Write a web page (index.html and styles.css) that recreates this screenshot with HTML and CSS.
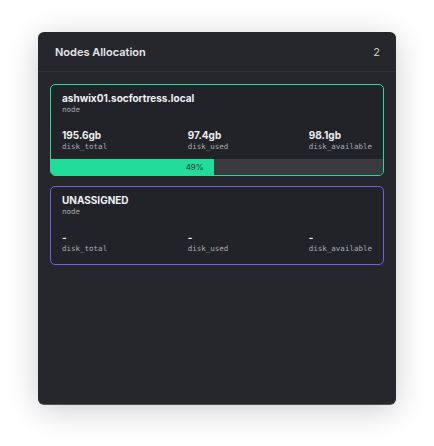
FILE: index.html
```html
<html>
<head>
  <link rel="stylesheet" href="styles.css">
</head>
<body>
  <div class="panel">
    <div class="panel-header">
      <span class="title">Nodes Allocation</span>
      <span class="count">2</span>
    </div>
    <div class="panel-body">
      <div class="node node-assigned">
        <div class="node-name">ashwix01.socfortress.local</div>
        <div class="node-sub">node</div>
        <div class="stats">
          <div class="stat">
            <div class="stat-value">195.6gb</div>
            <div class="stat-label">disk_total</div>
          </div>
          <div class="stat">
            <div class="stat-value">97.4gb</div>
            <div class="stat-label">disk_used</div>
          </div>
          <div class="stat">
            <div class="stat-value">98.1gb</div>
            <div class="stat-label">disk_available</div>
          </div>
        </div>
        <div class="bar">
          <div class="bar-fill" style="width: 49%">49%</div>
        </div>
      </div>
      <div class="node node-unassigned">
        <div class="node-name">UNASSIGNED</div>
        <div class="node-sub">node</div>
        <div class="stats">
          <div class="stat">
            <div class="stat-value">-</div>
            <div class="stat-label">disk_total</div>
          </div>
          <div class="stat">
            <div class="stat-value">-</div>
            <div class="stat-label">disk_used</div>
          </div>
          <div class="stat">
            <div class="stat-value">-</div>
            <div class="stat-label">disk_available</div>
          </div>
        </div>
      </div>
    </div>
  </div>
</body>
</html>
```

FILE: styles.css
```css
body {
  margin: 0;
  padding: 32px 38px 0;
  background: #ffffff;
  font-family: Inter, "Noto Sans", sans-serif;
}
.panel {
  height: 372px;
  background: #26272d;
  border-radius: 6px;
  box-shadow: 0 6px 32px rgba(0, 0, 0, 0.2), 0 1px 0 #5d5e64;
  overflow: hidden;
}
.panel-header {
  height: 39px;
  display: flex;
  align-items: center;
  justify-content: space-between;
  padding: 0 16px 0 17px;
  border-bottom: 1px solid #313238;
}
.title {
  font-size: 11px;
  font-weight: 600;
  color: #e6e6e9;
}
.count {
  font-size: 11px;
  color: #c9cacd;
}
.panel-body {
  padding: 12px;
  display: flex;
  flex-direction: column;
  gap: 10px;
}
.node {
  border-radius: 5px;
  padding: 6px 11px 0;
  overflow: hidden;
  background: #222329;
}
.node-assigned {
  border: 1px solid #22dc9c;
}
.node-unassigned {
  border: 1px solid #6f60dc;
  padding-bottom: 10px;
}
.node-name {
  font-size: 10px;
  line-height: 14px;
  font-weight: 700;
  color: #f0f0f2;
}
.node-sub,
.stat-label {
  font-family: "DejaVu Sans Mono", monospace;
  font-size: 7.5px;
  line-height: 10px;
  color: #a8aab0;
}
.stats {
  display: flex;
  justify-content: space-between;
  margin-top: 14px;
}
.stat-value {
  font-size: 10px;
  line-height: 13px;
  font-weight: 700;
  color: #eeeef0;
}
.bar {
  height: 16px;
  margin: 7px -11px 0;
  background: #3a3b40;
}
.bar-fill {
  height: 100%;
  background: #22dc9c;
  color: #1d3b30;
  font-size: 8px;
  line-height: 16px;
  text-align: right;
  padding-right: 10px;
  box-sizing: border-box;
}
```
